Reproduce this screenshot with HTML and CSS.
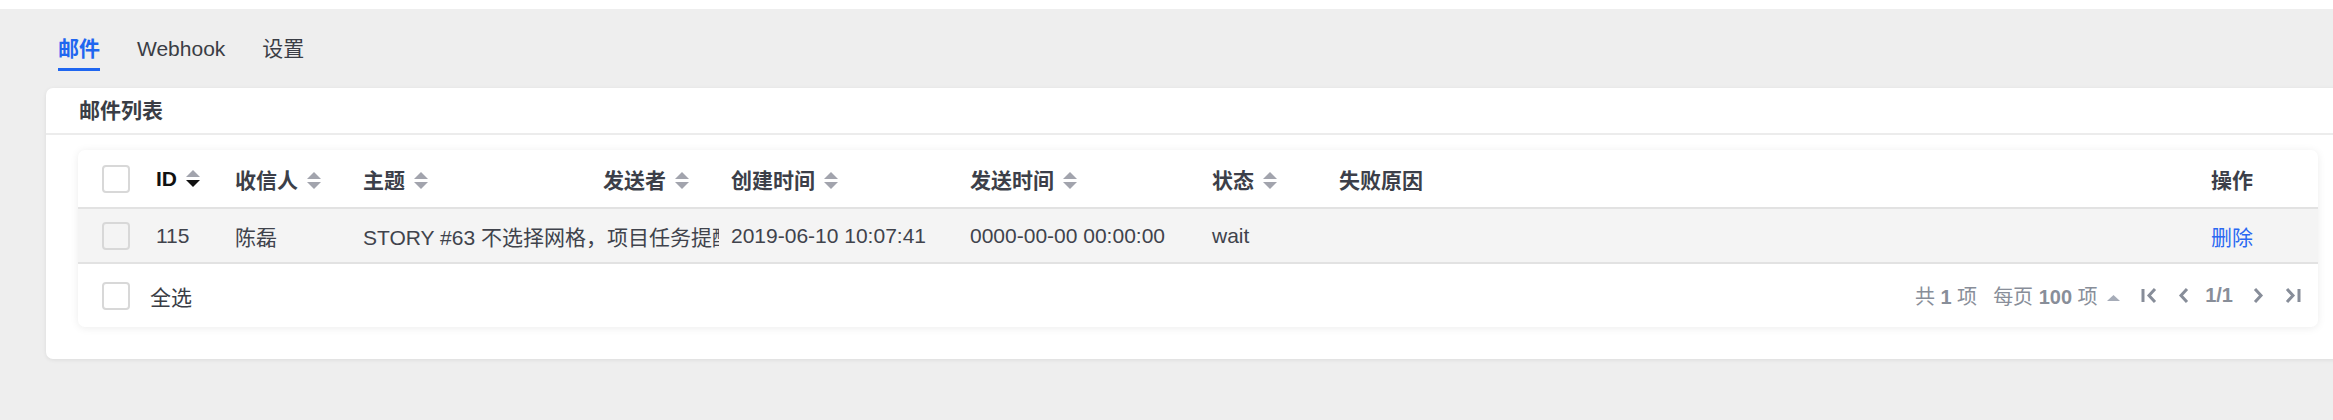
FILE: index.html
```html
<!DOCTYPE html>
<html lang="zh-CN">
<head>
    <meta charset="UTF-8">
    <meta name="viewport" content="width=device-width, initial-scale=1.0">
    <title>邮件列表</title>
    <link rel="stylesheet" href="styles.css">
</head>
<body>
    <div class="page">
        <div class="tabs">
            <a class="tab active">邮件</a>
            <a class="tab">Webhook</a>
            <a class="tab">设置</a>
        </div>

        <div class="card">
            <div class="card-header">邮件列表</div>
            <div class="card-body">
                <div class="table-box">
                    <table class="mail-table">
                        <colgroup>
                            <col style="width: 78px">
                            <col style="width: 79px">
                            <col style="width: 128px">
                            <col style="width: 240px">
                            <col style="width: 128px">
                            <col style="width: 239px">
                            <col style="width: 242px">
                            <col style="width: 127px">
                            <col>
                            <col style="width: 107px">
                        </colgroup>
                        <thead>
                            <tr>
                                <th class="check-cell"><span class="checkbox"></span></th>
                                <th class="sorted">ID <svg class="sort" viewBox="0 0 14 18"><path class="up" d="M7 0L14 7H0z"/><path class="down" d="M0 10H14L7 17z"/></svg></th>
                                <th>收信人 <svg class="sort" viewBox="0 0 14 18"><path class="up" d="M7 0L14 7H0z"/><path class="down" d="M0 10H14L7 17z"/></svg></th>
                                <th>主题 <svg class="sort" viewBox="0 0 14 18"><path class="up" d="M7 0L14 7H0z"/><path class="down" d="M0 10H14L7 17z"/></svg></th>
                                <th>发送者 <svg class="sort" viewBox="0 0 14 18"><path class="up" d="M7 0L14 7H0z"/><path class="down" d="M0 10H14L7 17z"/></svg></th>
                                <th>创建时间 <svg class="sort" viewBox="0 0 14 18"><path class="up" d="M7 0L14 7H0z"/><path class="down" d="M0 10H14L7 17z"/></svg></th>
                                <th>发送时间 <svg class="sort" viewBox="0 0 14 18"><path class="up" d="M7 0L14 7H0z"/><path class="down" d="M0 10H14L7 17z"/></svg></th>
                                <th>状态 <svg class="sort" viewBox="0 0 14 18"><path class="up" d="M7 0L14 7H0z"/><path class="down" d="M0 10H14L7 17z"/></svg></th>
                                <th>失败原因</th>
                                <th>操作</th>
                            </tr>
                        </thead>
                        <tbody>
                            <tr>
                                <td class="check-cell"><span class="checkbox"></span></td>
                                <td>115</td>
                                <td>陈磊</td>
                                <td class="subject" colspan="2"><div class="clip">STORY #63 不选择网格，项目任务提醒</div></td>
                                <td>2019-06-10 10:07:41</td>
                                <td>0000-00-00 00:00:00</td>
                                <td>wait</td>
                                <td></td>
                                <td><a class="link">删除</a></td>
                            </tr>
                        </tbody>
                    </table>

                    <div class="table-footer">
                        <label class="select-all"><span class="checkbox"></span>全选</label>
                        <div class="pager">
                            <span>共 <b>1</b> 项</span>
                            <span class="per-page">每页 <b>100</b> 项 <svg class="caret" viewBox="0 0 13 6"><path d="M6.5 0L13 6H0z"/></svg></span>
                            <svg class="pg-icon wide" viewBox="0 0 17 17"><path d="M2 2V15M14 2L8 8.5L14 15"/></svg>
                            <svg class="pg-icon" viewBox="0 0 11 17"><path d="M9 2L3 8.5L9 15"/></svg>
                            <b class="pg-num">1/1</b>
                            <svg class="pg-icon" viewBox="0 0 11 17"><path d="M2 2L8 8.5L2 15"/></svg>
                            <svg class="pg-icon wide" viewBox="0 0 17 17"><path d="M3 2L9 8.5L3 15M15 2V15"/></svg>
                        </div>
                    </div>
                </div>
            </div>
        </div>
    </div>
</body>
</html>
```

FILE: styles.css
```css
body {
    margin: 0;
    background: #fff;
    font-family: 'Liberation Sans', 'Noto Sans CJK SC', sans-serif;
    font-size: 21px;
    color: #40434c;
    overflow: hidden;
}

.page {
    margin-top: 9px;
    min-height: 420px;
    background: #eeeeee;
    padding: 25px 0 0 46px;
    box-sizing: border-box;
}

.tabs {
    display: flex;
    gap: 37px;
    padding-left: 12px;
    margin-bottom: 17px;
}

.tab {
    line-height: 30px;
    padding-bottom: 4px;
    border-bottom: 3px solid transparent;
    color: #3a3d45;
    cursor: pointer;
}

.tab.active {
    color: #1f66f0;
    font-weight: bold;
    border-bottom-color: #1f66f0;
}

.card {
    background: #fff;
    border-radius: 7px;
    margin-right: -17px;
    box-shadow: 0 1px 4px rgba(0,0,0,0.08);
}

.card-header {
    height: 45px;
    line-height: 45px;
    padding-left: 33px;
    font-weight: bold;
    color: #3a3d45;
    border-bottom: 2px solid #ececec;
}

.card-body {
    padding: 15px 32px 32px 32px;
}

.table-box {
    background: #fff;
    border-radius: 7px;
    box-shadow: 0 1px 8px rgba(0,0,0,0.08);
    overflow: hidden;
}

.mail-table {
    width: 100%;
    table-layout: fixed;
    border-collapse: collapse;
}

.mail-table th,
.mail-table td {
    padding: 0;
    text-align: left;
    white-space: nowrap;
    vertical-align: middle;
}

.mail-table th {
    height: 57px;
    font-weight: bold;
    color: #3c3f49;
    border-bottom: 2px solid #e2e2e2;
}

.mail-table th.sorted {
    color: #111;
}

.mail-table td {
    height: 53px;
    background: #f4f4f4;
    border-bottom: 2px solid #e2e2e2;
}

.mail-table .check-cell {
    padding-left: 24px;
}

.mail-table td.subject {
    padding-right: 12px;
}

.clip {
    overflow: hidden;
}

.sort {
    width: 14px;
    height: 18px;
    margin-left: 3px;
    vertical-align: -2px;
}

.sort path {
    fill: #a2a4ad;
}

.sorted .sort .down {
    fill: #111;
}

.checkbox {
    display: block;
    width: 28px;
    height: 28px;
    box-sizing: border-box;
    border: 2px solid #d8d8d8;
    border-radius: 4px;
}

.link {
    color: #2a68f2;
    cursor: pointer;
}

.table-footer {
    height: 63px;
    display: flex;
    align-items: center;
    justify-content: space-between;
    padding: 0 17px 0 24px;
}

.select-all {
    display: flex;
    align-items: center;
    gap: 20px;
    color: #3a3d45;
}

.pager {
    display: flex;
    align-items: center;
    font-size: 20px;
    color: #888e99;
}

.pager b {
    font-weight: bold;
}

.per-page {
    margin-left: 16px;
}

.caret {
    width: 13px;
    height: 6px;
    margin-left: 4px;
    vertical-align: 3px;
}

.caret path {
    fill: #a6acb8;
}

.pg-icon {
    width: 11px;
    height: 17px;
    margin-left: 20px;
    fill: none;
    stroke: #878d99;
    stroke-width: 3;
}

.pg-icon.wide {
    width: 17px;
}

.per-page + .pg-icon {
    margin-left: 21px;
}

.pg-num {
    margin-left: 16px;
}

.pg-num + .pg-icon {
    margin-left: 20px;
}
```
